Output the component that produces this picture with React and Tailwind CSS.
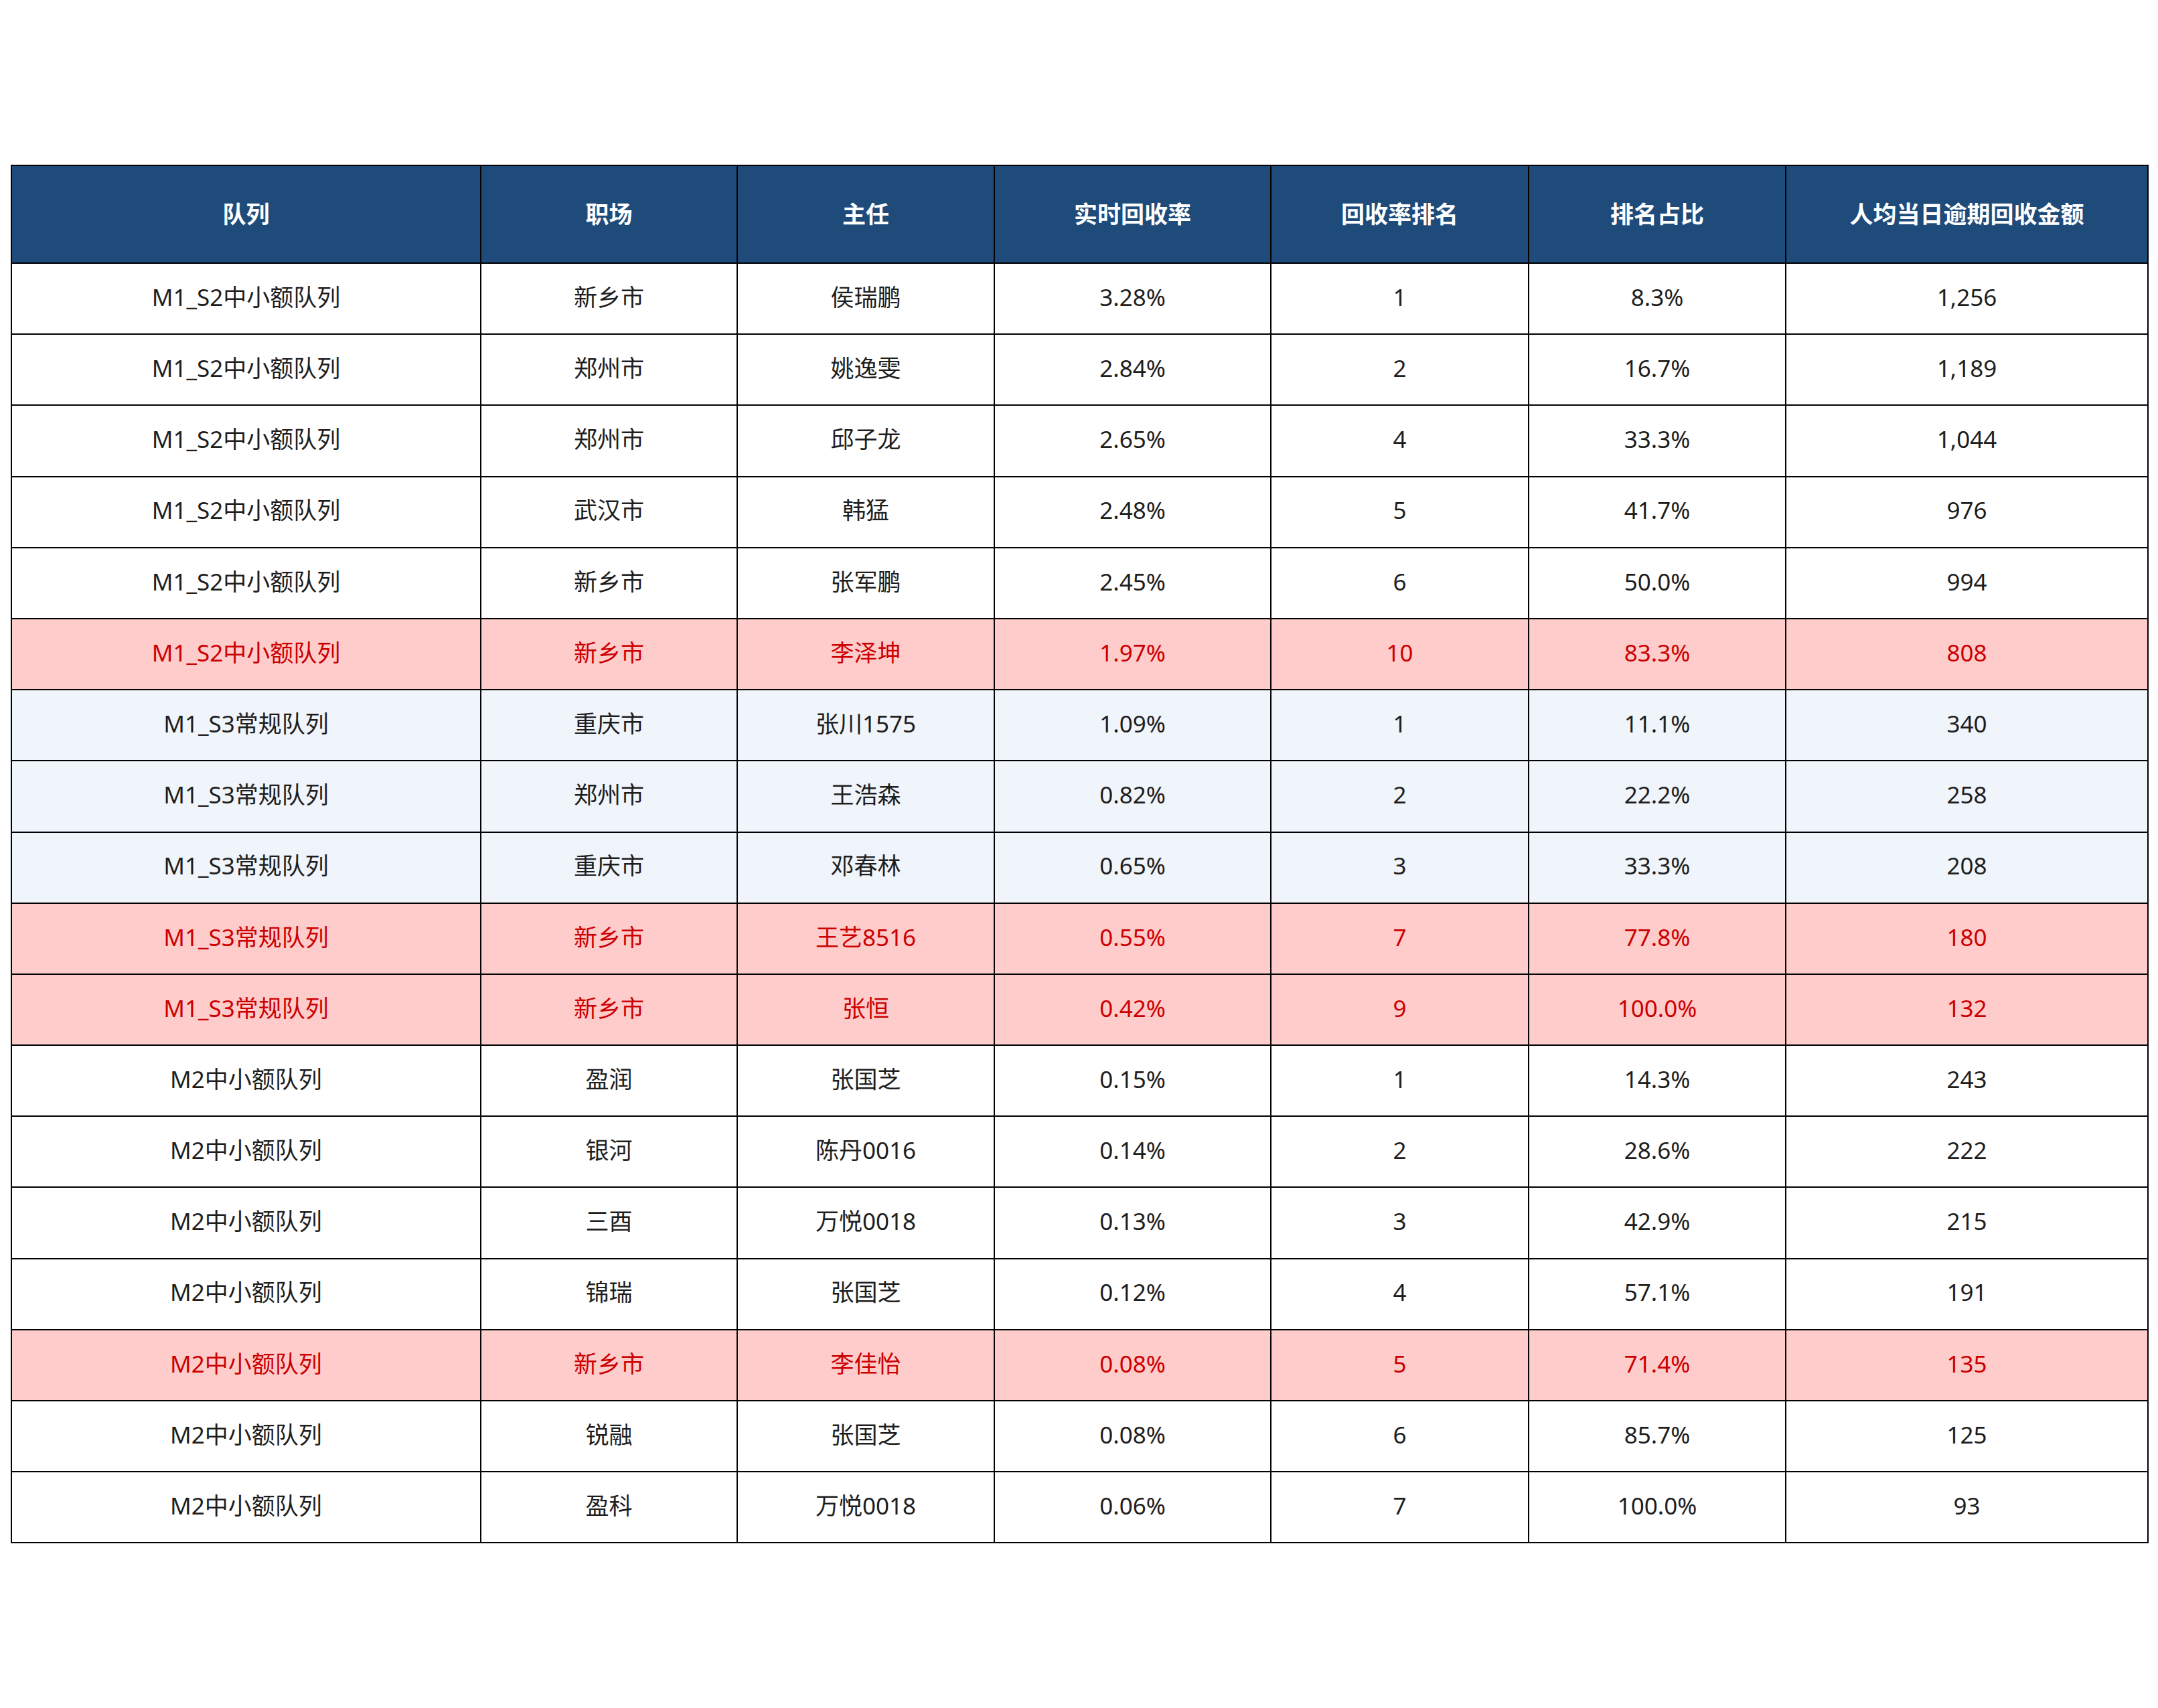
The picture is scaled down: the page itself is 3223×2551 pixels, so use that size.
import React from "react";

const headers = ["队列", "职场", "主任", "实时回收率", "回收率排名", "排名占比", "人均当日逾期回收金额"];
const widths = [701, 383, 384, 413, 385, 384, 541];

// kind: n = normal, r = red highlight, b = light blue
const rows = [
  ["M1_S2中小额队列", "新乡市", "侯瑞鹏", "3.28%", "1", "8.3%", "1,256", "n"],
  ["M1_S2中小额队列", "郑州市", "姚逸雯", "2.84%", "2", "16.7%", "1,189", "n"],
  ["M1_S2中小额队列", "郑州市", "邱子龙", "2.65%", "4", "33.3%", "1,044", "n"],
  ["M1_S2中小额队列", "武汉市", "韩猛", "2.48%", "5", "41.7%", "976", "n"],
  ["M1_S2中小额队列", "新乡市", "张军鹏", "2.45%", "6", "50.0%", "994", "n"],
  ["M1_S2中小额队列", "新乡市", "李泽坤", "1.97%", "10", "83.3%", "808", "r"],
  ["M1_S3常规队列", "重庆市", "张川1575", "1.09%", "1", "11.1%", "340", "b"],
  ["M1_S3常规队列", "郑州市", "王浩森", "0.82%", "2", "22.2%", "258", "b"],
  ["M1_S3常规队列", "重庆市", "邓春林", "0.65%", "3", "33.3%", "208", "b"],
  ["M1_S3常规队列", "新乡市", "王艺8516", "0.55%", "7", "77.8%", "180", "r"],
  ["M1_S3常规队列", "新乡市", "张恒", "0.42%", "9", "100.0%", "132", "r"],
  ["M2中小额队列", "盈润", "张国芝", "0.15%", "1", "14.3%", "243", "n"],
  ["M2中小额队列", "银河", "陈丹0016", "0.14%", "2", "28.6%", "222", "n"],
  ["M2中小额队列", "三酉", "万悦0018", "0.13%", "3", "42.9%", "215", "n"],
  ["M2中小额队列", "锦瑞", "张国芝", "0.12%", "4", "57.1%", "191", "n"],
  ["M2中小额队列", "新乡市", "李佳怡", "0.08%", "5", "71.4%", "135", "r"],
  ["M2中小额队列", "锐融", "张国芝", "0.08%", "6", "85.7%", "125", "n"],
  ["M2中小额队列", "盈科", "万悦0018", "0.06%", "7", "100.0%", "93", "n"],
];

const rowStyle = {
  n: "bg-white text-[#1e1e1e]",
  r: "bg-[#ffcccc] text-[#cc0000]",
  b: "bg-[#f0f4fb] text-[#1e1e1e]",
};

export default function App() {
  return (
    <div className="min-h-[2551px] bg-white pt-[246px] px-[16px] font-['Noto_Sans','Noto_Sans_CJK_SC',sans-serif]">
      <table className="table-fixed border-collapse w-[3191px] text-[35px]">
        <colgroup>
          {widths.map((w, i) => (
            <col key={i} style={{ width: w }} />
          ))}
        </colgroup>
        <thead>
          <tr className="bg-[#1f4b7a] text-white">
            {headers.map((h) => (
              <th key={h} className="h-[146px] border-2 border-black font-bold text-center align-middle">
                {h}
              </th>
            ))}
          </tr>
        </thead>
        <tbody>
          {rows.map((r, i) => (
            <tr key={i} className={rowStyle[r[7]]}>
              {r.slice(0, 7).map((c, j) => (
                <td key={j} className="h-[106.2px] border-2 border-black text-center align-middle p-0 pb-[4px]">
                  {c}
                </td>
              ))}
            </tr>
          ))}
        </tbody>
      </table>
    </div>
  );
}
